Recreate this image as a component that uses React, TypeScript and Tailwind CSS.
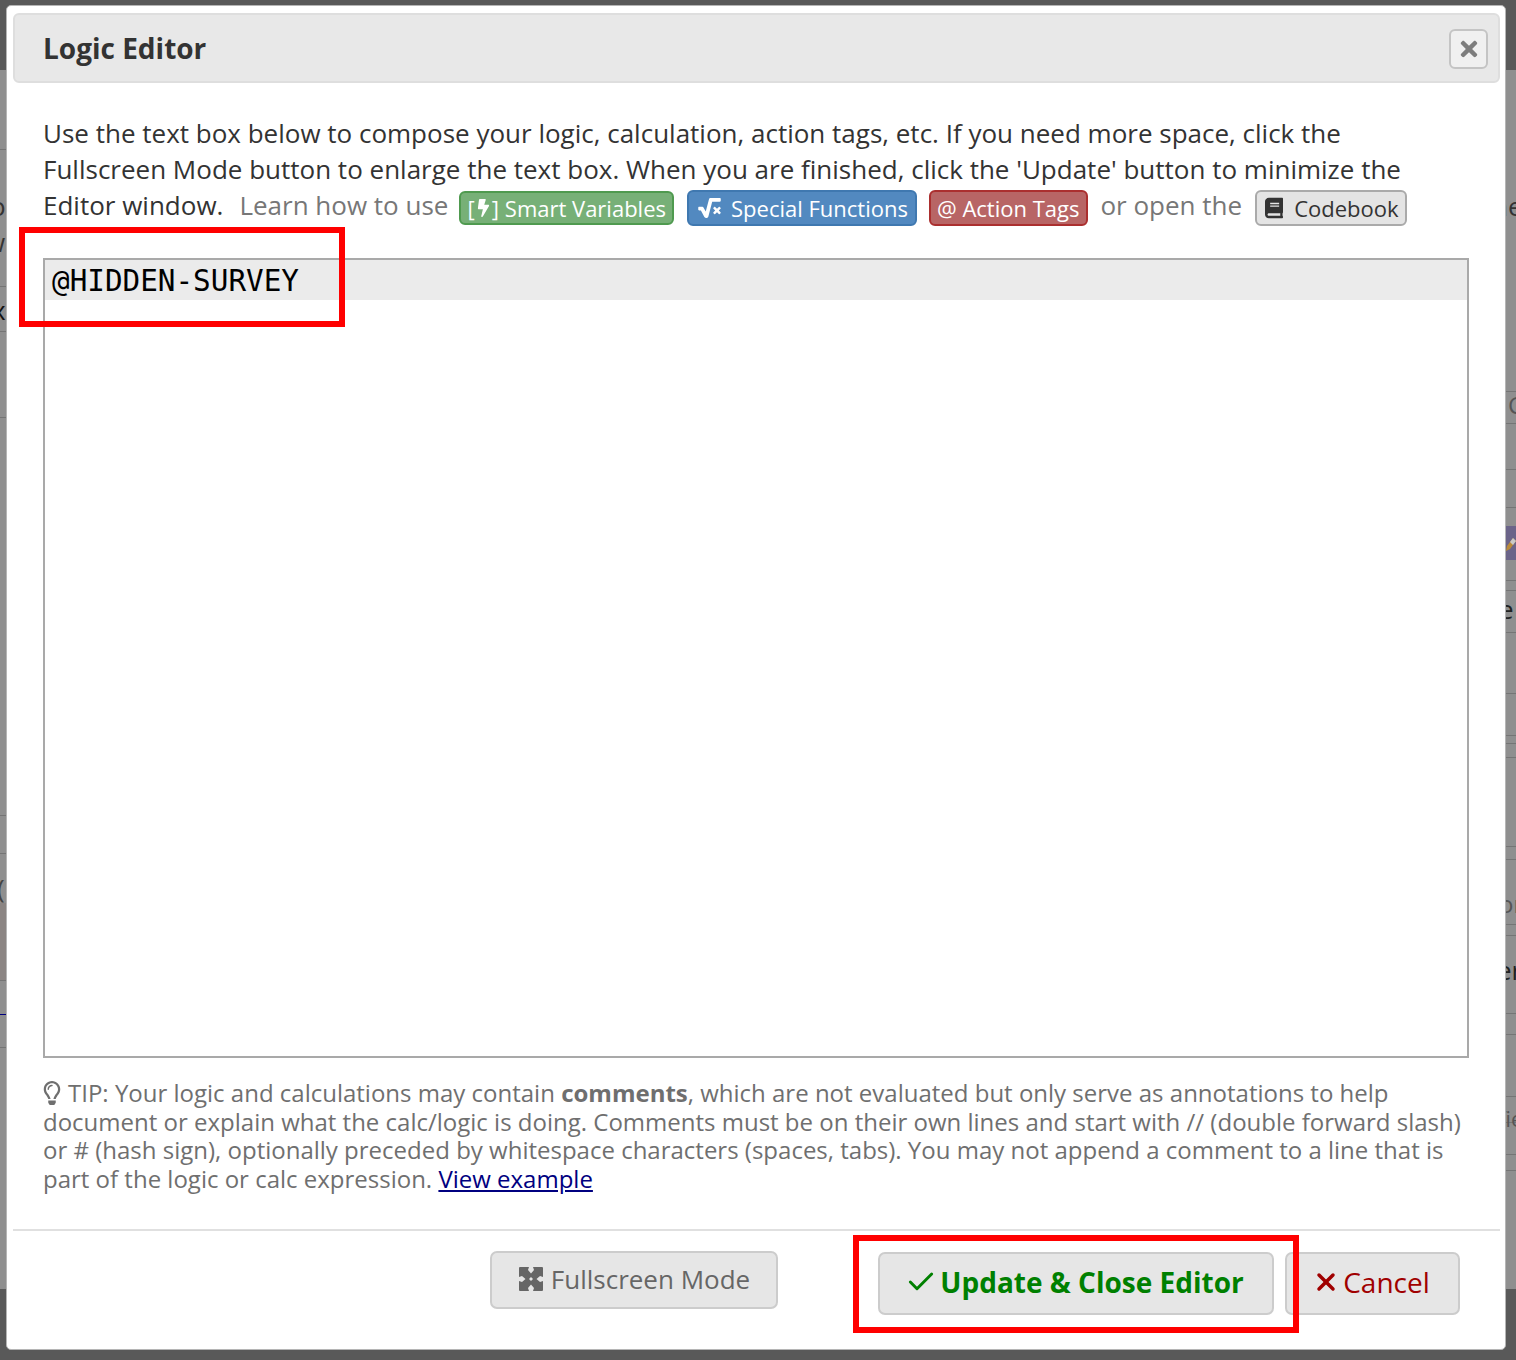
import React from 'react';
import { FaBolt, FaBook, FaRegLightbulb, FaSquareRootAlt, FaTimes } from 'react-icons/fa';
import { Check, X } from 'lucide-react';

const leftLines = [149, 286, 331, 417, 815, 853, 903, 980, 1047];
const rightLines = [391, 423, 469, 507, 580, 590, 632, 693, 735, 743, 757, 846, 859, 924, 935, 1013, 1034, 1096, 1122, 1154, 1170];

const Backdrop: React.FC = () => (
  <div className="absolute inset-0 overflow-hidden bg-[#595959]">
    <div className="absolute left-0 right-0 top-[70px] h-[1219px] bg-[#8f8f8f]" />
    {leftLines.map(top => (
      <div key={top} className="absolute left-0 w-[7px] h-px bg-[#757575]" style={{ top }} />
    ))}
    {rightLines.map(top => (
      <div key={top} className="absolute right-0 w-[10px] h-px bg-[#757575]" style={{ top }} />
    ))}
    <div className="absolute left-0 top-[903px] w-[7px] h-[77px] bg-[#8b8583]" />
    <div className="absolute right-0 top-[526px] w-[10px] h-[34px] bg-[#6b6489]" />
    <svg viewBox="0 0 10 20" className="absolute right-0 top-[533px] w-[10px] h-[20px]">
      <path d="M0 18 1 13 7 5l3 3-6 8z" fill="#b98a3a" />
      <path d="M4 9 7 5l3 3-3 4z" fill="#c9c9c9" />
    </svg>
    <div className="absolute left-0 top-[1014px] w-[7px] h-px bg-[#000080]" />
    <span className="absolute left-[-10px] top-[188px] text-[26px] leading-9 text-[#333]">o</span>
    <span className="absolute left-[-15px] top-[224px] text-[26px] leading-9 text-[#333]">w</span>
    <span className="absolute left-[-8px] top-[292px] text-[26px] leading-9 text-[#111]">x</span>
    <span className="absolute left-[-3px] top-[870px] text-[26px] leading-9 text-[#444]">(</span>
    <span className="absolute left-[1492px] top-[188px] text-[26px] leading-9 text-[#333]">ne</span>
    <span className="absolute left-[1508px] top-[387px] text-[24px] leading-9 text-[#555]">C</span>
    <span className="absolute left-[1499px] top-[591px] text-[26px] leading-9 text-[#222]">e</span>
    <span className="absolute left-[1499px] top-[886px] text-[24px] leading-9 text-[#555]">or</span>
    <span className="absolute left-[1497px] top-[952px] text-[26px] leading-9 text-[#222]">er</span>
    <span className="absolute left-[1498px] top-[1100px] text-[22px] leading-9 text-[#555]">fie</span>
  </div>
);

const Tag: React.FC<{ className: string; children: React.ReactNode }> = ({ className, children }) => (
  <span className={`flex items-center mt-[6px] pl-[6px] border-2 rounded-[6px] text-[22px] leading-none whitespace-nowrap ${className}`}>{children}</span>
);

const ExpandIcon: React.FC = () => (
  <svg viewBox="0 0 24 24" className="w-[24px] h-[24px] mr-[8px] fill-[#666]">
    <path fillRule="evenodd" d="M1 0H10L9 3 12 6.500 15 3 14 0H23a1 1 0 0 1 1 1V10L21 9 17.500 12 21 15 24 14v9a1 1 0 0 1-1 1H14l1-3L12 17.500 9 21l1 3H1a1 1 0 0 1-1-1V14l3 1L6.500 12 3 9 0 10V1a1 1 0 0 1 1-1zM12 10l-2 2 2 2 2-2z" />
  </svg>
);

const App: React.FC = () => {
  return (
    <div className="relative h-[1360px] w-[1516px] overflow-hidden font-['Open_Sans',sans-serif]">
      <Backdrop />

      <div className="absolute left-[6px] top-[5px] w-[1500px] h-[1345px] bg-white border border-[#b5b5b5] rounded-[5px] pl-[6px] pr-[5px] pt-[7px] flex flex-col">
        <div className="h-[70px] shrink-0 flex items-center justify-between bg-[#e8e8e8] border-2 border-[#dedede] rounded-[6px] pl-[28px] pr-[10px]">
          <h1 className="text-[28px] font-bold text-[#333]">Logic Editor</h1>
          <button className="mt-[1px] w-[39px] h-[40px] flex items-center justify-center bg-[#f0f0f0] border-2 border-[#c4c4c4] rounded-[6px]">
            <FaTimes className="w-[22px] h-[24px] text-[#7d7d7d]" />
          </button>
        </div>

        <div className="pl-[30px] pr-[31px] pt-[32px]">
          <p className="text-[26px] leading-[36px] text-[#333]">
            Use the text box below to compose your logic, calculation, action tags, etc. If you need more space, click the Fullscreen Mode button to enlarge the text box. When you are finished, click the 'Update' button to minimize the
          </p>
          <div className="flex items-center h-[36px] text-[26px] leading-[36px]">
            <span className="text-[#333]">Editor window.</span>
            <span className="ml-[16px] text-[#777]">Learn how to use</span>
            <Tag className="ml-[11px] h-[34px] pr-[6px] bg-[#77b077] border-[#4f9a4f] text-white">
              <span className="flex items-center gap-[2px]">[<FaBolt className="w-[13px] h-[18px]" />]</span>
              <span className="ml-[6px]">Smart Variables</span>
            </Tag>
            <Tag className="ml-[13px] h-[36px] pr-[7px] bg-[#5289c0] border-[#3f78b0] text-white">
              <FaSquareRootAlt className="w-[25px] h-[20px] ml-[2px]" />
              <span className="ml-[9px]">Special Functions</span>
            </Tag>
            <Tag className="ml-[12px] h-[36px] pr-[7px] bg-[#b86565] border-[#ab2f2f] text-white">@ Action Tags</Tag>
            <span className="ml-[12px] text-[#777]">or open the</span>
            <Tag className="ml-[13px] h-[36px] pr-[6px] bg-[#e4e4e4] border-[#aaaaaa] text-[#333]">
              <FaBook className="w-[18px] h-[22px] ml-[2px]" />
              <span className="ml-[11px]">Codebook</span>
            </Tag>
          </div>

          <div className="mt-[35px] h-[800px] border-2 border-[#a9a9a9]">
            <div className="h-[40px] bg-[#ebebeb] pl-[7px] font-['DejaVu_Sans_Mono',monospace] text-[29.3px] leading-[42px] text-black">@HIDDEN-SURVEY</div>
          </div>

          <p className="mt-[21px] text-[24px] leading-[28.7px] text-[#6f6f6f]">
            <FaRegLightbulb className="inline w-[18px] h-[24px] mr-[7px] align-[-3px]" />
            TIP: Your logic and calculations may contain <b className="font-bold">comments</b>, which are not evaluated but only serve as annotations to help document or explain what the calc/logic is doing. Comments must be on their own lines and start with // (double forward slash) or # (hash sign), optionally preceded by whitespace characters (spaces, tabs). You may not append a comment to a line that is part of the logic or calc expression. <a className="text-[#000080] underline">View example</a>
          </p>
        </div>

        <div className="mt-auto">
          <div className="h-[2px] bg-[#e0e0e0]" />
          <div className="flex items-start justify-end pr-[40px] pt-[20px] h-[118px]">
            <button className="w-[288px] h-[58px] pb-[2px] pl-[1px] flex items-center justify-center bg-[#e6e6e6] border-2 border-[#cccccc] rounded-[7px] text-[26px] text-[#666]">
              <ExpandIcon />
              Fullscreen Mode
            </button>
            <button className="ml-[100px] mt-[1px] w-[396px] h-[63px] pb-[4px] pr-[3px] flex items-center justify-center bg-[#e6e6e6] border-2 border-[#cccccc] rounded-[7px] text-[28px] font-bold text-[#008000]">
              <Check className="w-[32px] h-[32px] mr-[3px]" strokeWidth={2.2} />
              Update &amp; Close Editor
            </button>
            <button className="ml-[11px] mt-[1px] w-[175px] h-[63px] pb-[4px] pr-[3px] flex items-center justify-center bg-[#e6e6e6] border-2 border-[#cccccc] rounded-[7px] text-[28px] text-[#a00000]">
              <X className="w-[28px] h-[28px] mr-[3px]" strokeWidth={3} />
              Cancel
            </button>
          </div>
        </div>
      </div>

      {/* red callouts drawn on top of the screenshot */}
      <div className="absolute left-[19px] top-[227px] w-[326px] h-[100px] border-[6px] border-[#ff0000]" />
      <div className="absolute left-[853px] top-[1235px] w-[446px] h-[98px] border-[6px] border-[#ff0000]" />
    </div>
  );
};

export default App;
